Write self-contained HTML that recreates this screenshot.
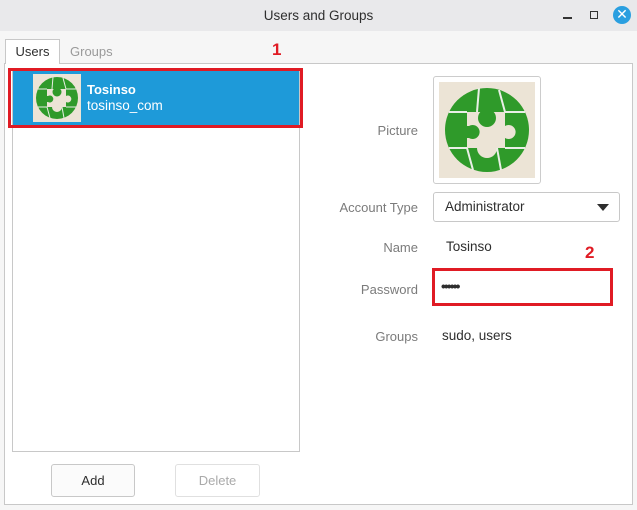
<!DOCTYPE html>
<html><head><style>
*{box-sizing:border-box;margin:0;padding:0}
body{width:637px;height:510px;background:#f6f6f6;font-family:"Liberation Sans",sans-serif;font-size:13px;color:#2e2e2e;position:relative;overflow:hidden}
.a{position:absolute}
.lbl{position:absolute;right:219px;color:#7b7b7b;text-align:right;font-size:13px}
</style></head><body>
<svg width="0" height="0" style="position:absolute"><defs>
<g id="logo">
<rect width="96" height="96" fill="#ece4d6"/>
<circle cx="48" cy="48" r="42" fill="#2f9a2a"/>
<path d="M28 30 H66 V44 A7 7 0 1 1 66 56 V66 H58 A10 10 0 0 1 38 66 H28 V56 H30 A7 7 0 1 0 30 44 H28Z" fill="#ece4d6"/>
<circle cx="48" cy="36" r="9" fill="#2f9a2a"/>
<path d="M44 24 h8 v10 h-8z" fill="#2f9a2a"/>
<path d="M10 30 L28 30 M66 30 L86 30 M10 66 L28 66 M66 66 L86 66 M40 6 L38 30 M60 8 L66 30 M34 88 L28 66 M62 88 L58 66" stroke="#e9efe6" stroke-width="2"/>
</g></defs></svg>
<div class="a" style="left:0;top:0;width:637px;height:31px;background:#e9e9eb"></div>
<div class="a" style="left:0;top:8px;width:637px;text-align:center;font-size:13.5px;color:#2e2e2e">Users and Groups</div>
<div class="a" style="left:563px;top:17px;width:9px;height:1.5px;background:#333"></div>
<div class="a" style="left:590px;top:11px;width:8px;height:8px;border:1.5px solid #333"></div>
<div class="a" style="left:613px;top:6px;width:18px;height:18px;border-radius:50%;background:#2a9fe0;color:#fff;text-align:center;line-height:17px;font-size:14px">✕</div>

<div class="a" style="left:4px;top:63px;width:629px;height:442px;background:#fff;border:1px solid #c8c8c8"></div>
<div class="a" style="left:5px;top:39px;width:55px;height:25px;background:#fff;border:1px solid #c8c8c8;border-bottom:none;text-align:center;line-height:24px;color:#2e2e2e">Users</div>
<div class="a" style="left:70px;top:44px;color:#9a9a9a">Groups</div>
<div class="a" style="left:272px;top:40px;color:#e01b24;font-weight:bold;font-size:17px">1</div>

<div class="a" style="left:12px;top:70px;width:288px;height:382px;border:1px solid #c8c8c8;background:#fff"></div>
<div class="a" style="left:13px;top:71px;width:286px;height:55px;background:#1e9ad9"></div>
<div class="a" style="left:8px;top:68px;width:295px;height:60px;border:3px solid #e01b24"></div>
<svg class="a" style="left:33px;top:74px" width="48" height="48" viewBox="0 0 96 96"><use href="#logo"/></svg>
<div class="a" style="left:87px;top:82px;color:#fff;font-weight:bold;font-size:13px">Tosinso</div>
<div class="a" style="left:87px;top:98px;color:#fff;font-size:13.5px">tosinso_com</div>

<div class="a" style="left:51px;top:464px;width:84px;height:33px;border:1px solid #c8c8c8;border-radius:3px;background:#fbfbfb;text-align:center;line-height:31px">Add</div>
<div class="a" style="left:175px;top:464px;width:85px;height:33px;border:1px solid #e0e0e0;border-radius:3px;background:#fff;text-align:center;line-height:31px;color:#aaa">Delete</div>

<div class="lbl" style="top:123px">Picture</div>
<div class="a" style="left:433px;top:76px;width:108px;height:108px;border:1px solid #ccc;border-radius:3px;background:#fff"></div>
<svg class="a" style="left:439px;top:82px" width="96" height="96" viewBox="0 0 96 96"><use href="#logo"/></svg>
<div class="lbl" style="top:200px">Account Type</div>
<div class="a" style="left:433px;top:192px;width:187px;height:30px;border:1px solid #c8c8c8;border-radius:3px;background:#fff;padding-left:11px;line-height:28px;font-size:13.5px">Administrator</div>
<div class="a" style="left:597px;top:204px;width:0;height:0;border-left:6px solid transparent;border-right:6px solid transparent;border-top:7px solid #2e2e2e"></div>
<div class="lbl" style="top:240px">Name</div>
<div class="a" style="left:446px;top:239px;font-size:13.5px">Tosinso</div>
<div class="a" style="left:585px;top:243px;color:#e01b24;font-weight:bold;font-size:17px">2</div>
<div class="lbl" style="top:282px">Password</div>
<div class="a" style="left:432px;top:268px;width:181px;height:38px;border:3px solid #e01b24"></div>
<div class="a" style="left:441px;top:278px;font-size:14px;font-weight:bold;letter-spacing:-2px">••••••</div>
<div class="lbl" style="top:329px">Groups</div>
<div class="a" style="left:442px;top:328px;font-size:13.5px">sudo, users</div>
</body></html>
